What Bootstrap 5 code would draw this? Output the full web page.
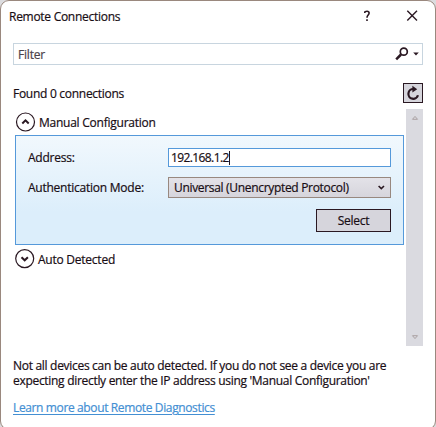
<!DOCTYPE html>
<html lang="en">
<head>
<meta charset="utf-8">
<meta name="viewport" content="width=device-width, initial-scale=1">
<title>Remote Connections</title>
<link href="https://cdn.jsdelivr.net/npm/bootstrap@5.3.0/dist/css/bootstrap.min.css" rel="stylesheet">
<style>
  html, body { height: 427px; overflow: hidden; }
  body { background: #dcdcdf; font-family: "Open Sans", "Noto Sans", sans-serif; font-size: 12px; line-height: 15px; color: #180d14; -webkit-text-stroke: .2px currentColor; }
  svg { display: block; flex: none; }
  .dialog-window { height: 430px; border: 1px solid #9a887e; border-radius: 9px; background: #fff; }
  .title-row { height: 30px; padding: 0 16px 0 8px; }
  .title-row button { border: 0; background: none; padding: 0; color: inherit; }
  .help-btn { margin-right: 26px; }
  .filter-box { height: 22px; margin: 12px 12px 0; border: 1px solid #c8d5df; padding: 0 3px 0 4px; }
  .filter-box input { border: 0; outline: 0; padding: 0; width: 200px; color: #4b434b; letter-spacing: -.2px; }
  .found-row { height: 20px; margin: 18px 12px 0; }
  .refresh { width: 20px; height: 20px; border: 1px solid #2a1822; background: #d6d5dc; padding: 0; }
  .list-area { margin: 6px 12px 0 14px; height: 237px; }
  .section-head { height: 26px; gap: 1px; }
  .section-head.second { margin-top: 1px; }
  .config-panel { width: 389px; height: 110px; border: 1px solid #5599da; background: linear-gradient(#f1f8fd, #dceefb 70%); padding: 12px 12px 0; }
  .field { width: 223px; }
  .address { height: 19px; border: 1px solid #5599da; background: #fff; padding: 0 2px; letter-spacing: -.6px; }
  .caret { width: 1px; height: 14px; background: #1f1720; }
  .mode-row { margin: 10px 0 11px; }
  .mode { height: 21px; border: 1px solid #98887f; background: linear-gradient(#e3e2e8, #d6d5dc); padding: 0 5px; letter-spacing: -.32px; }
  .select-btn { width: 75px; height: 23px; border: 1px solid #2a1822; background: #d6d5dc; padding: 0; color: inherit; letter-spacing: -.3px; }
  .scroll-track { width: 17px; background: #dadae0; padding: 6px 0; }
  .notes { margin: 12px 12px 0; letter-spacing: -.3px; }
  .learn { color: #438fd3; margin-top: 12px; letter-spacing: -.37px; text-underline-offset: 2px; }
  .t-title { letter-spacing: -.28px; }
  .t-tight { letter-spacing: -.24px; }
  .t-found { letter-spacing: -.28px; }
</style>
<script src="https://cdn.jsdelivr.net/npm/bootstrap@5.3.0/dist/js/bootstrap.bundle.min.js"></script>
</head>
<body>
<main class="dialog-window d-flex flex-column">
  <header class="title-row d-flex align-items-center">
    <span class="t-title me-auto">Remote Connections</span>
    <button class="help-btn" aria-label="Help"><svg width="16" height="16" viewBox="0 0 16 16" fill="none" stroke="#2a1822" stroke-width="1.6"><path d="M5.8 4.9V4.3C5.8 3.5 6.6 3.2 8 3.2S10.1 3.8 10.1 5.1C10.1 7 8 7.2 8 9.8M8 11.2V13"/></svg></button>
    <button class="ms-1" aria-label="Close"><svg width="14" height="14" viewBox="0 0 14 14" fill="none" stroke="#2a1822" stroke-width="1.4"><path d="M2.3 1.8l9.7 9.7M12 1.8L2.3 11.5"/></svg></button>
  </header>
  <div class="filter-box d-flex align-items-center">
    <input class="me-auto" aria-label="Filter" value="Filter">
    <svg width="14" height="14" viewBox="0 0 14 14" fill="none" stroke="#2a1822"><circle cx="8.8" cy="4.7" r="3.5" stroke-width="1.7"/><path d="M6 7.5L1.2 12.3" stroke-width="2.5"/></svg>
    <svg class="ms-1" width="6" height="4" viewBox="0 0 6 4"><path d="M.2 .5h5.6L3 3.4z" fill="#2a1822"/></svg>
  </div>
  <div class="found-row d-flex align-items-center justify-content-between">
    <span class="t-found">Found 0 connections</span>
    <button class="refresh d-flex align-items-center justify-content-center" aria-label="Refresh"><svg width="18" height="18" viewBox="0 0 18 18"><path d="M9.5 5A4.9 4.9 0 1 0 14 11.3" fill="none" stroke="#2a1822" stroke-width="2.2"/><path d="M8.4 1.8L13.2 5.2L8.4 8.4z" fill="#2a1822"/></svg></button>
  </div>
  <section class="list-area d-flex justify-content-between">
    <div>
      <div class="section-head d-flex align-items-center">
        <svg width="22" height="22" viewBox="0 0 22 22" fill="none" stroke="#2a1822"><circle cx="10.5" cy="11" r="9" stroke-width="1.2"/><path d="M7.3 12.5l3.2-3.1 3.2 3.1" stroke-width="2"/></svg>
        <span class="t-tight">&#8202;Manual Configuration</span>
      </div>
      <div class="config-panel">
        <div class="d-flex align-items-center justify-content-between"><span class="t-tight">Address:</span><div class="field address d-flex align-items-center"><span>192.168.1.2</span><span class="caret"></span></div></div>
        <div class="mode-row d-flex align-items-center justify-content-between"><span class="t-tight">Authentication Mode:</span>
          <div class="field mode d-flex align-items-center justify-content-between"><span>Universal (Unencrypted Protocol)</span><svg width="8" height="6" viewBox="0 0 8 6" fill="none" stroke="#2a1822" stroke-width="1.6"><path d="M1.6 1L4.3 3.6 7 1"/></svg></div></div>
        <div class="d-flex justify-content-end"><button class="select-btn">Select</button></div>
      </div>
      <div class="section-head second d-flex align-items-center">
        <svg width="22" height="22" viewBox="0 0 22 22" fill="none" stroke="#2a1822"><circle cx="9.7" cy="10.6" r="9" stroke-width="1.2"/><path d="M6.5 9.2l3.2 3.1 3.2-3.1" stroke-width="2"/></svg>
        <span class="t-tight">Auto Detected</span>
      </div>
    </div>
    <div class="scroll-track d-flex flex-column align-items-center justify-content-between">
      <svg width="8" height="5" viewBox="0 0 8 5"><path d="M1.5 4.3L4 1.4l2.5 2.9z" fill="none" stroke="#aaa1a2"/></svg>
      <svg width="8" height="5" viewBox="0 0 8 5"><path d="M1.5 .7L4 3.6 6.5 .7z" fill="none" stroke="#aaa1a2"/></svg>
    </div>
  </section>
  <footer class="notes text-nowrap">
    <div>Not all devices can be auto detected. If you do not see a device you are</div>
    <div>expecting directly enter the IP address using 'Manual Configuration'</div>
    <a href="#" class="learn d-inline-block">Learn more about Remote Diagnostics</a>
  </footer>
</main>
</body>
</html>
